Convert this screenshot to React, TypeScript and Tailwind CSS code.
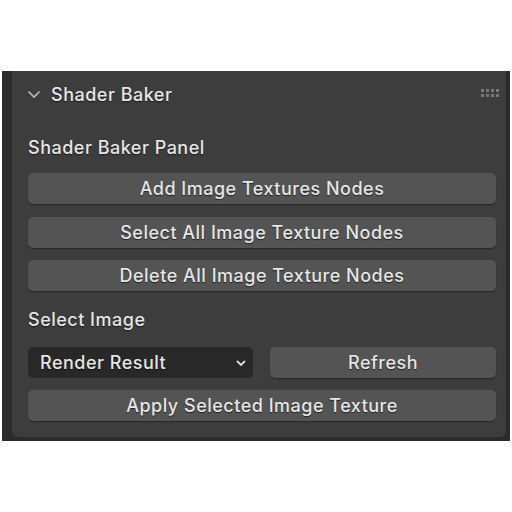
const font = {
  fontFamily: 'Inter, "Noto Sans", sans-serif',
};

function GripDots() {
  return (
    <svg width="20" height="12" viewBox="0 0 20 12">
      {[0, 1, 2, 3].map((c) =>
        [0, 1].map((r) => (
          <rect key={`${c}-${r}`} x={1 + c * 5} y={1 + r * 5} width="3" height="3" fill="#777777" />
        ))
      )}
    </svg>
  );
}

function PanelButton({ label }: { label: string }) {
  return (
    <button className="h-[31px] w-full rounded-[5px] bg-[#545454] text-[18px] font-medium tracking-[0.5px] text-[#e6e6e6] shadow-[0_1px_1px_rgba(0,0,0,0.35)] [text-shadow:0_1px_1px_rgba(0,0,0,0.6)]">
      {label}
    </button>
  );
}

export default function App() {
  return (
    <div className="h-[512px] w-[512px] bg-white pt-[71px]" style={font}>
      <div className="ml-[2px] w-[508px] bg-[#2b2b2b] pl-[10px] pr-[4px] pb-[4px]">
        <div className="rounded-b-[6px] bg-[#3d3d3d] pb-[16px]">
          {/* header */}
          <div className="flex h-[46px] items-center pl-[15px] pr-[6px]">
            <svg width="14" height="9" viewBox="0 0 14 9" className="mr-[10px]">
              <path d="M1.5 1.5 L7 7 L12.5 1.5" fill="none" stroke="#bdbdbd" strokeWidth="1.6" />
            </svg>
            <span className="text-[18px] font-medium tracking-[0.5px] text-[#e8e8e8] [text-shadow:0_1px_1px_rgba(0,0,0,0.6)]">
              Shader Baker
            </span>
            <div className="ml-auto">
              <GripDots />
            </div>
          </div>

          <div className="pl-[16px] pr-[10px] text-[18px] font-medium tracking-[0.5px] text-[#e6e6e6] [text-shadow:0_1px_1px_rgba(0,0,0,0.6)]">
            <div className="flex h-[56px] items-center pt-[4px]">Shader Baker Panel</div>
            <div className="flex flex-col gap-[12.5px]">
              <PanelButton label="Add Image Textures Nodes" />
              <PanelButton label="Select All Image Texture Nodes" />
              <PanelButton label="Delete All Image Texture Nodes" />
            </div>
            <div className="flex h-[56px] items-center">Select Image</div>
            <div className="flex gap-[17px]">
              <div className="flex h-[31px] w-[225px] items-center rounded-[5px] bg-[#282828] pl-[12px] pr-[6px]">
                <span>Render Result</span>
                <svg width="12" height="8" viewBox="0 0 12 8" className="ml-auto">
                  <path d="M2 2 L6 6 L10 2" fill="none" stroke="#dddddd" strokeWidth="1.8" />
                </svg>
              </div>
              <div className="flex-1">
                <PanelButton label="Refresh" />
              </div>
            </div>
            <div className="mt-[12px]">
              <PanelButton label="Apply Selected Image Texture" />
            </div>
          </div>
        </div>
      </div>
    </div>
  );
}
